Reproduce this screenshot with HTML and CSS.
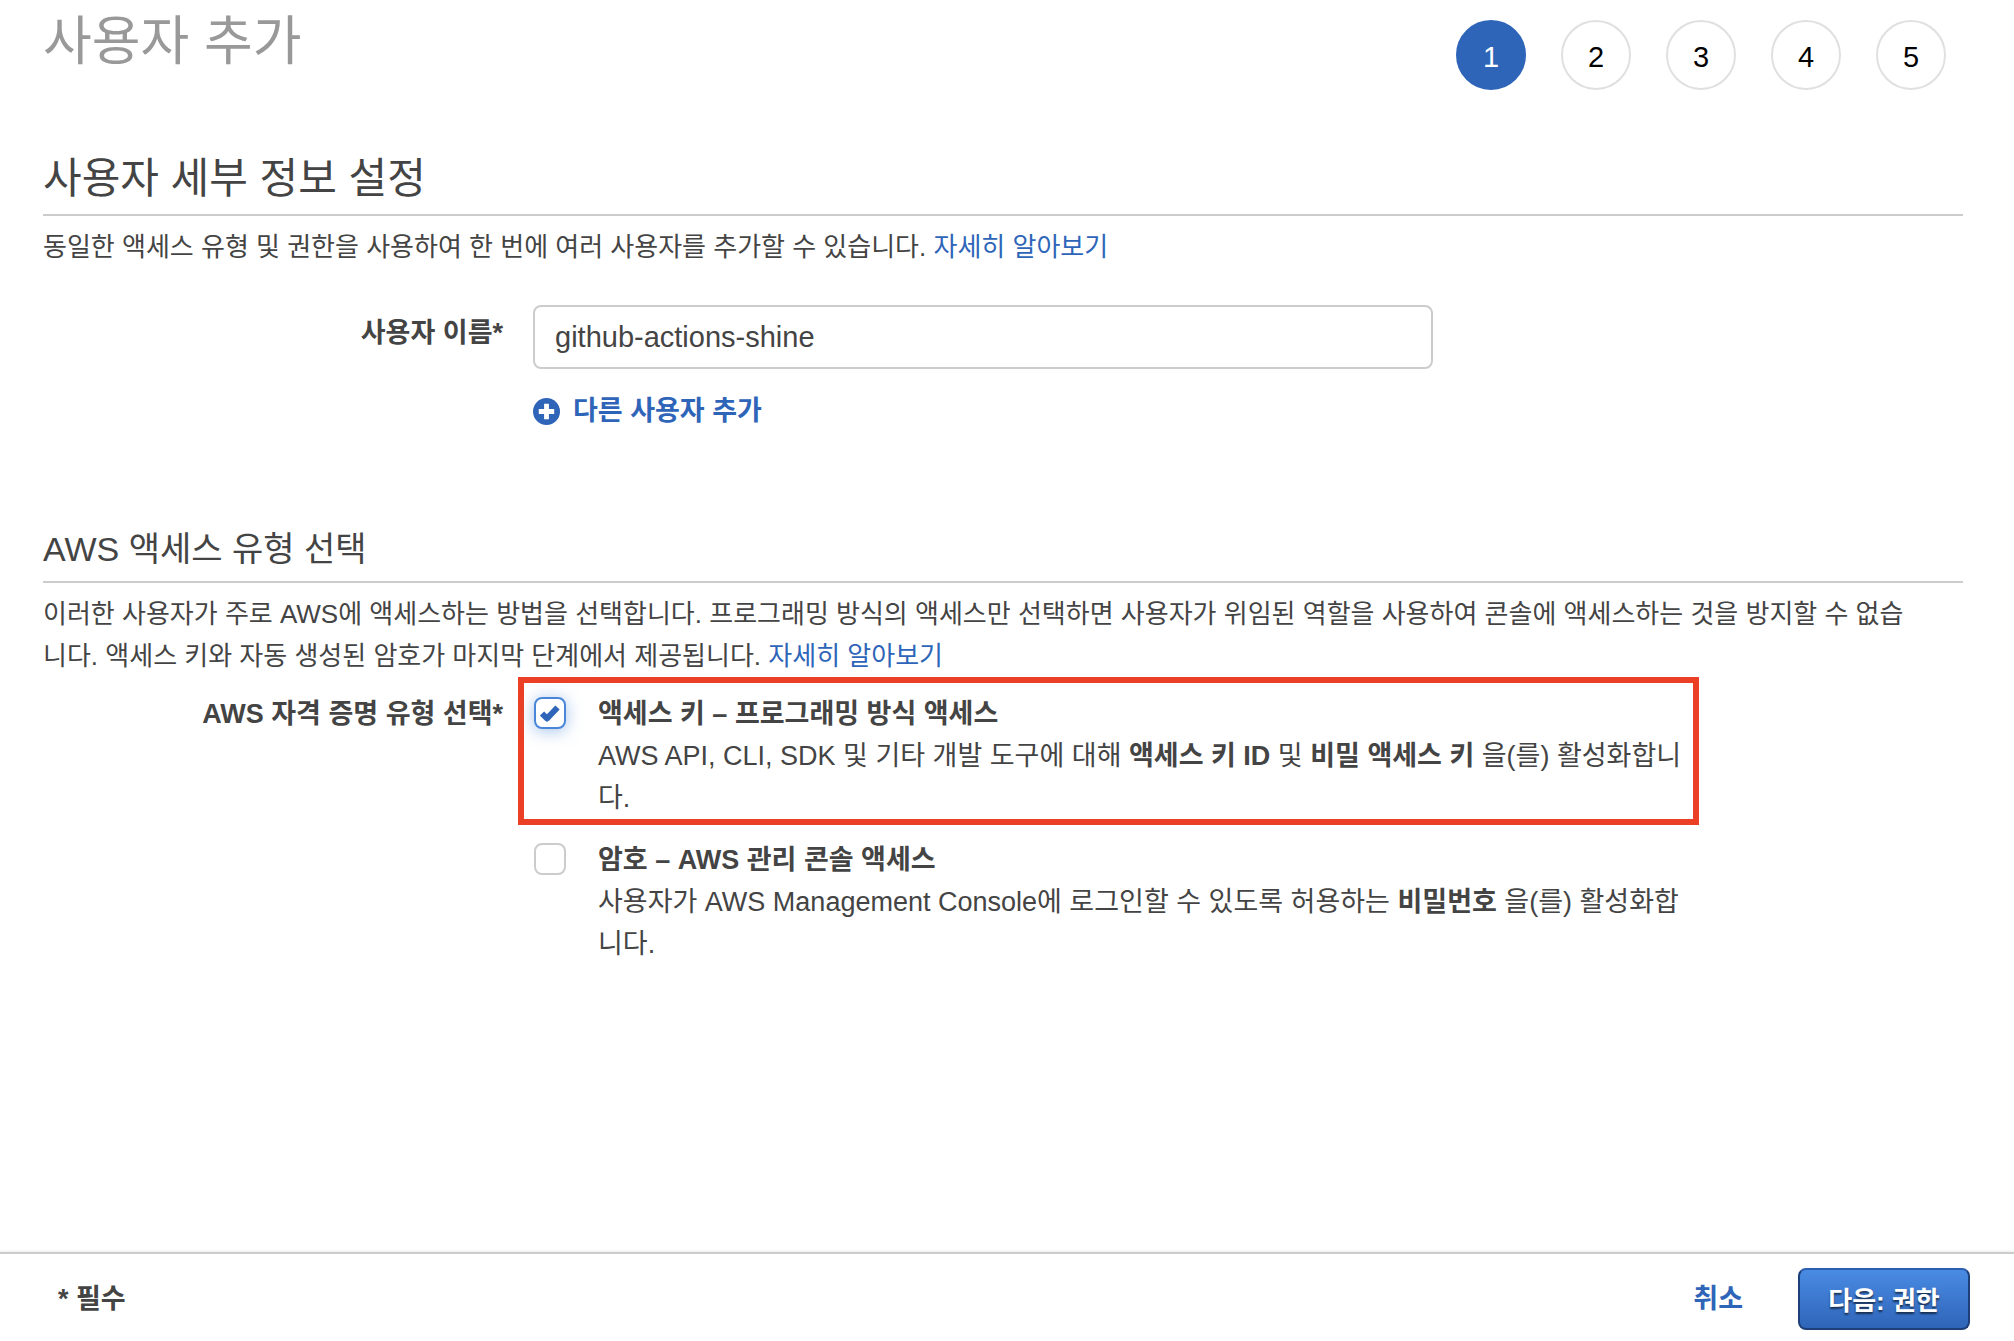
FILE: index.html
```html
<!DOCTYPE html>
<html lang="ko">
<head>
    <meta charset="UTF-8">
    <meta name="viewport" content="width=device-width, initial-scale=1.0">
    <title>사용자 추가</title>
    <link rel="stylesheet" href="styles.css">
</head>
<body>
    <header class="page-header">
        <h1>사용자 추가</h1>
        <ol class="steps">
            <li class="step active" aria-current="step">1</li>
            <li class="step">2</li>
            <li class="step">3</li>
            <li class="step">4</li>
            <li class="step">5</li>
        </ol>
    </header>

    <main class="content">
        <section class="user-details">
            <h2>사용자 세부 정보 설정</h2>
            <p class="intro">동일한 액세스 유형 및 권한을 사용하여 한 번에 여러 사용자를 추가할 수 있습니다. <a href="#">자세히 알아보기</a></p>
            <div class="form-row name-row">
                <label class="row-label" for="userName">사용자 이름*</label>
                <div class="row-body">
                    <input class="text-input" type="text" id="userName" value="github-actions-shine">
                    <button class="add-user" type="button">
                        <svg class="plus-icon" viewBox="0 0 28 28" aria-hidden="true">
                            <circle cx="14" cy="14" r="14"/>
                            <path d="M11.5 6h5v5.500h5.500v5h-5.500v5.500h-5v-5.500h-5.500v-5h5.500z"/>
                        </svg>
                        다른 사용자 추가
                    </button>
                </div>
            </div>
        </section>

        <section class="access-type">
            <h3>AWS 액세스 유형 선택</h3>
            <p class="intro">이러한 사용자가 주로 AWS에 액세스하는 방법을 선택합니다. 프로그래밍 방식의 액세스만 선택하면 사용자가 위임된 역할을 사용하여 콘솔에 액세스하는 것을 방지할 수 없습니다. 액세스 키와 자동 생성된 암호가 마지막 단계에서 제공됩니다. <a href="#">자세히 알아보기</a></p>
            <div class="form-row type-row" role="group" aria-labelledby="typeLabel">
                <div class="row-label" id="typeLabel">AWS 자격 증명 유형 선택*</div>
                <div class="options">
                    <div class="option highlighted">
                        <input class="checkbox" type="checkbox" id="accessKey" checked>
                        <div class="option-text">
                            <label for="accessKey">액세스 키 – 프로그래밍 방식 액세스</label>
                            <p>AWS API, CLI, SDK 및 기타 개발 도구에 대해 <b>액세스 키 ID</b> 및 <b>비밀 액세스 키</b> 을(를) 활성화합니다.</p>
                        </div>
                    </div>
                    <div class="option">
                        <input class="checkbox" type="checkbox" id="password">
                        <div class="option-text">
                            <label for="password">암호 – AWS 관리 콘솔 액세스</label>
                            <p>사용자가 AWS Management Console에 로그인할 수 있도록 허용하는 <b>비밀번호</b> 을(를) 활성화합니다.</p>
                        </div>
                    </div>
                </div>
            </div>
        </section>
    </main>

    <footer class="page-footer">
        <span class="required">* 필수</span>
        <a class="cancel" href="#">취소</a>
        <button class="next" type="button">다음: 권한</button>
    </footer>
</body>
</html>
```
FILE: styles.css
```css
* {
    box-sizing: border-box;
}
body {
    margin: 0;
    min-height: 100vh;
    display: flex;
    flex-direction: column;
    background: #fff;
    color: #444;
    font-family: "Liberation Sans", "Noto Sans CJK KR", sans-serif;
    font-size: 27px;
    line-height: 42px;
}
h1, h2, h3, p, ol {
    margin: 0;
    padding: 0;
    font-weight: normal;
}
a {
    color: #2e65b8;
    text-decoration: none;
}
input, button {
    font-family: inherit;
    color: inherit;
}
.page-header {
    display: flex;
    justify-content: space-between;
    align-items: flex-start;
    height: 90px;
    padding: 0 68px 0 43px;
}
h1 {
    color: #999;
    font-size: 53px;
    line-height: 84px;
}
.steps {
    display: flex;
    gap: 35px;
    padding-top: 20px;
    list-style: none;
}
.step {
    width: 70px;
    height: 70px;
    border: 2px solid #e0e0e0;
    border-radius: 50%;
    color: #000;
    font-size: 29px;
    line-height: 70px;
    text-align: center;
}
.step.active {
    background: #2e65b8;
    border-color: #2e65b8;
    color: #fff;
}
.content {
    flex: 1;
    padding: 58px 51px 0 43px;
}
h2, h3 {
    border-bottom: 2px solid #ccc;
    margin-bottom: 10px;
}
h2 {
    font-size: 42px;
    line-height: 62px;
    padding-bottom: 4px;
}
h3 {
    font-size: 34px;
    line-height: 52px;
    padding-bottom: 6px;
}
.intro {
    padding-right: 48px;
    font-size: 26px;
}
.form-row {
    display: flex;
    align-items: flex-start;
}
.row-label {
    flex: 0 0 460px;
    font-weight: bold;
    text-align: right;
}
.name-row {
    gap: 30px;
    padding-top: 37px;
}
.name-row .row-label {
    padding-top: 7px;
}
.row-body {
    flex: 1;
}
.text-input {
    display: block;
    width: 100%;
    max-width: 900px;
    height: 64px;
    padding: 0 20px;
    border: 2px solid #ccc;
    border-radius: 8px;
    background: #fff;
    font-size: 29px;
}
.add-user {
    display: flex;
    align-items: center;
    gap: 13px;
    margin-top: 21px;
    padding: 0;
    border: none;
    background: none;
    color: #2e65b8;
    font-size: 27px;
    font-weight: bold;
    line-height: 42px;
    cursor: pointer;
}
.plus-icon {
    width: 27px;
    height: 27px;
    fill: #2e65b8;
}
.plus-icon path {
    fill: #fff;
}
.access-type {
    padding-top: 91px;
}
.type-row {
    gap: 15px;
}
.type-row .row-label {
    padding-top: 16px;
}
.options {
    flex: 1;
    max-width: 1181px;
}
.option {
    display: flex;
    align-items: flex-start;
    gap: 32px;
    padding: 10px 8px 0 10px;
    border: 6px solid transparent;
}
.option + .option {
    margin-top: -2px;
}
.option.highlighted {
    border-color: #eb4025;
}
.option-text {
    flex: 1;
}
.option-text label {
    display: block;
    font-weight: bold;
}
.checkbox {
    appearance: none;
    flex: none;
    width: 32px;
    height: 32px;
    margin: 4px 0;
    border: 2px solid #ccc;
    border-radius: 8px;
    background: #fff;
}
.checkbox:checked {
    border-color: #4a86d8;
    background: #fff url("data:image/svg+xml,%3Csvg xmlns='http://www.w3.org/2000/svg' viewBox='0 0 28 28'%3E%3Cpath d='M6 14.500L11 19.500L21.500 8.500' fill='none' stroke='%232e65b8' stroke-width='6' stroke-linejoin='round'/%3E%3C/svg%3E") center / 28px 28px no-repeat;
    box-shadow: 0 2px 16px rgba(74, 134, 216, 0.5);
}
.page-footer {
    display: flex;
    align-items: center;
    height: 89px;
    padding: 2px 44px 0 58px;
    border-top: 2px solid #ccc;
    box-shadow: 0 -1px 2px rgba(0, 0, 0, 0.08);
    font-weight: bold;
}
.required {
    flex: 1;
}
.next {
    width: 172px;
    height: 62px;
    margin-left: 55px;
    padding: 0;
    border: 2px solid #1e4079;
    border-top-color: #2c5fb0;
    border-radius: 8px;
    background: linear-gradient(#4a8be4, #2e65b8);
    color: #fff;
    font-size: 26px;
    font-weight: bold;
    text-shadow: 0 2px 2px rgba(0, 0, 0, 0.6);
    cursor: pointer;
}
```
